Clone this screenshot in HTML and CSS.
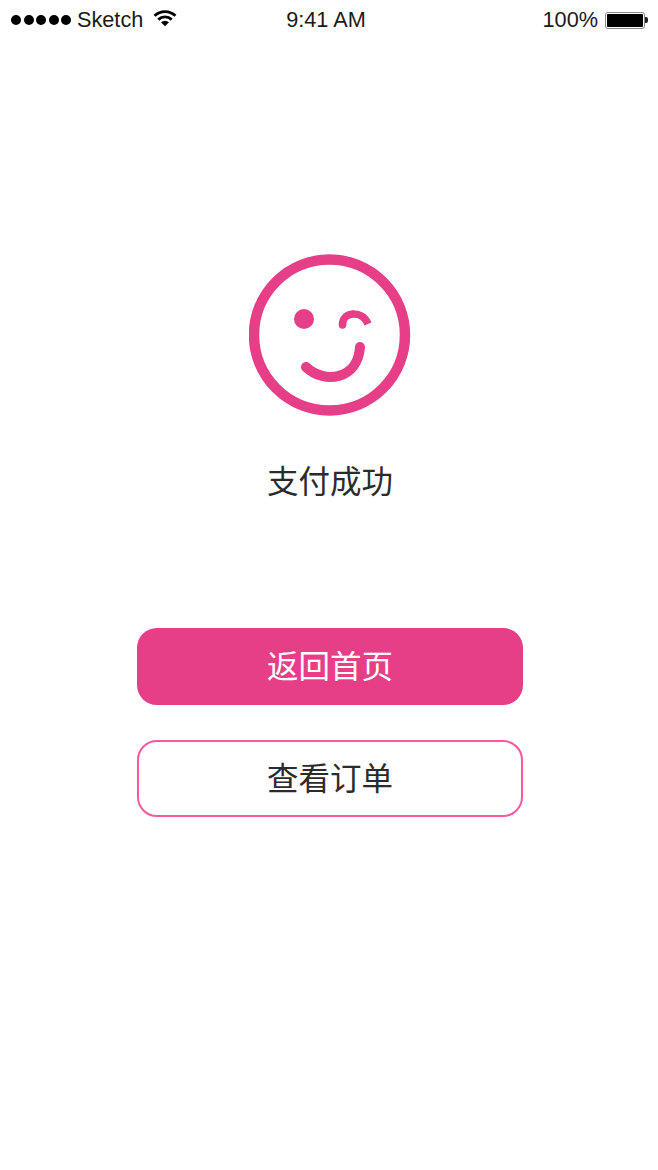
FILE: index.html

```html
<!doctype html>
<html lang="zh-CN">
<head>
  <meta charset="UTF-8">
  <meta name="viewport" content="width=device-width, initial-scale=1">
  <title>支付成功</title>
  <link rel="stylesheet" href="styles.css">
</head>
<body>
  <div class="statusbar">
    <div class="status-left">
      <span class="signal"><i></i><i></i><i></i><i></i><i></i></span>
      <span class="carrier">Sketch</span>
      <svg class="wifi" width="24" height="18" viewBox="0 0 24 18">
        <path d="M1.500 6.800C7.500 1.200 16.500 1.200 22.500 6.800" fill="none" stroke="#000" stroke-width="2.800"/>
        <path d="M5.300 10.600C9.200 7 14.800 7 18.700 10.600" fill="none" stroke="#000" stroke-width="2.800"/>
        <path d="M8 13.200C10.500 11.200 13.500 11.200 16 13.200L12 17.200Z" fill="#000"/>
      </svg>
    </div>
    <div class="status-time">9:41 AM</div>
    <div class="status-right">
      <span class="percent">100%</span>
      <span class="battery"><i class="battery-level"></i></span>
      <span class="battery-cap"></span>
    </div>
  </div>

  <main class="result">
    <svg class="smiley" width="162" height="162" viewBox="0 0 162 162">
      <circle cx="80.500" cy="81" r="75.500" fill="none" stroke="#e63e87" stroke-width="10.500"/>
      <circle cx="55" cy="65" r="10" fill="#e63e87"/>
      <path d="M93.500 71C93 58 113 55 119 70" fill="none" stroke="#e63e87" stroke-width="7.500"/>
      <circle cx="93.500" cy="71" r="3.750" fill="#e63e87"/>
      <path d="M57 113C76 131 109 125 111 93" fill="none" stroke="#e63e87" stroke-width="10" stroke-linecap="round"/>
    </svg>
    <p class="result-text">支付成功</p>
    <div class="actions">
      <a class="btn btn-primary">返回首页</a>
      <a class="btn btn-outline">查看订单</a>
    </div>
  </main>
</body>
</html>
```

FILE: styles.css

```css
* {
  box-sizing: border-box;
}

html, body {
  margin: 0;
  padding: 0;
}

body {
  width: 658px;
  height: 1170px;
  background: #fff;
  color: #2b2b2b;
  font-family: "Liberation Sans", "Noto Sans CJK SC", sans-serif;
  overflow: hidden;
}

.statusbar {
  height: 40px;
  padding: 0 10px 0 11px;
  display: grid;
  grid-template-columns: 1fr auto 1fr;
  align-items: center;
  font-size: 21.700px;
  color: #1a1a1a;
}

.status-left {
  display: flex;
  align-items: center;
}

.signal {
  display: flex;
  gap: 2.500px;
}

.signal i {
  width: 10px;
  height: 10px;
  border-radius: 50%;
  background: #000;
}

.carrier {
  margin-left: 6px;
}

.wifi {
  margin-left: 10px;
  margin-top: -5px;
}

.status-time {
  margin-right: 7px;
}

.status-right {
  display: flex;
  align-items: center;
  justify-content: flex-end;
}

.percent {
  margin-right: 7px;
}

.battery {
  width: 40px;
  height: 17px;
  padding: 1px;
  border: 1.500px solid #888;
  border-radius: 3px;
  display: flex;
}

.battery-level {
  flex: 1;
  background: #000;
  border-radius: 1px;
}

.battery-cap {
  width: 3px;
  height: 6px;
  background: #222;
  border-radius: 0 2px 2px 0;
}

.result {
  display: flex;
  flex-direction: column;
  align-items: center;
  padding: 214px 0 0 2px;
}

.smiley {
  display: block;
}

.result-text {
  margin: 46px 0 0;
  font-size: 31.500px;
  line-height: 40px;
}

.actions {
  margin-top: 126px;
  display: flex;
  flex-direction: column;
  gap: 35px;
}

.btn {
  width: 386px;
  height: 77px;
  padding-bottom: 5px;
  border-radius: 20px;
  display: flex;
  align-items: center;
  justify-content: center;
  font-size: 31.500px;
}

.btn-primary {
  background: #e63e87;
  color: #fff;
}

.btn-outline {
  background: #fff;
  border: 2px solid #f9589f;
  color: #2b2b2b;
}
```
